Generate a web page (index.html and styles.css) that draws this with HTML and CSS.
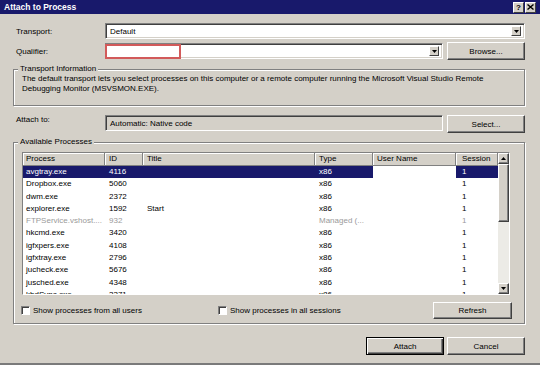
FILE: index.html
```html
<!DOCTYPE html>
<html lang="en">
<head>
    <meta charset="UTF-8">
    <meta name="viewport" content="width=device-width, initial-scale=1.0">
    <title>Attach to Process</title>
    <link rel="stylesheet" href="styles.css">
</head>
<body>
    <div class="dialog">
        <div class="titlebar">
            <span class="title">Attach to Process</span>
            <div class="caption-btns">
                <span class="cap-btn">?</span>
                <span class="cap-btn">
                    <svg width="7" height="6" viewBox="0 0 7 6"><path d="M0.5 0.5 L6.5 5.5 M6.5 0.5 L0.5 5.5" stroke="#000" stroke-width="1.4"/></svg>
                </span>
            </div>
        </div>

        <div class="content">
            <div class="form-row row-transport">
                <label class="lbl">Transport:</label>
                <div class="combo combo-wide">
                    <span class="combo-text">Default</span>
                    <span class="drop-btn"><svg width="5" height="3" viewBox="0 0 5 3"><path d="M0 0 H5 L2.5 3 Z" fill="#000"/></svg></span>
                </div>
            </div>

            <div class="form-row row-qualifier">
                <label class="lbl">Qualifier:</label>
                <div class="combo">
                    <span class="mark"></span>
                    <span class="combo-text"></span>
                    <span class="drop-btn"><svg width="5" height="3" viewBox="0 0 5 3"><path d="M0 0 H5 L2.5 3 Z" fill="#000"/></svg></span>
                </div>
                <button class="btn">Browse...</button>
            </div>

            <fieldset class="group group-info">
                <legend>Transport Information</legend>
                <p class="info-text">The default transport lets you select processes on this computer or a remote computer running the Microsoft Visual Studio Remote Debugging Monitor (MSVSMON.EXE).</p>
            </fieldset>

            <div class="form-row row-attach">
                <label class="lbl">Attach to:</label>
                <div class="readonly-field">Automatic: Native code</div>
                <button class="btn">Select...</button>
            </div>

            <fieldset class="group group-proc">
                <legend>Available Processes</legend>
                <div class="listview">
                    <div class="lv-main">
                        <div class="lv-head">
                            <span>Process</span>
                            <span>ID</span>
                            <span>Title</span>
                            <span>Type</span>
                            <span>User Name</span>
                            <span>Session</span>
                        </div>
                        <div class="lv-body">
                            <div class="lv-row selected"><span>avgtray.exe</span><span>4116</span><span></span><span>x86</span><span></span><span>1</span></div>
                            <div class="lv-row"><span>Dropbox.exe</span><span>5060</span><span></span><span>x86</span><span></span><span>1</span></div>
                            <div class="lv-row"><span>dwm.exe</span><span>2372</span><span></span><span>x86</span><span></span><span>1</span></div>
                            <div class="lv-row"><span>explorer.exe</span><span>1592</span><span>Start</span><span>x86</span><span></span><span>1</span></div>
                            <div class="lv-row disabled"><span>FTPService.vshost....</span><span>932</span><span></span><span>Managed (...</span><span></span><span>1</span></div>
                            <div class="lv-row"><span>hkcmd.exe</span><span>3420</span><span></span><span>x86</span><span></span><span>1</span></div>
                            <div class="lv-row"><span>igfxpers.exe</span><span>4108</span><span></span><span>x86</span><span></span><span>1</span></div>
                            <div class="lv-row"><span>igfxtray.exe</span><span>2796</span><span></span><span>x86</span><span></span><span>1</span></div>
                            <div class="lv-row"><span>jucheck.exe</span><span>5676</span><span></span><span>x86</span><span></span><span>1</span></div>
                            <div class="lv-row"><span>jusched.exe</span><span>4348</span><span></span><span>x86</span><span></span><span>1</span></div>
                            <div class="lv-row"><span>kbdSync.exe</span><span>3371</span><span></span><span>x86</span><span></span><span>1</span></div>
                        </div>
                    </div>
                    <div class="scrollbar">
                        <span class="sb-btn"><svg width="5" height="3" viewBox="0 0 5 3"><path d="M0 3 H5 L2.5 0 Z" fill="#000"/></svg></span>
                        <span class="sb-thumb"></span>
                        <span class="sb-track"></span>
                        <span class="sb-btn"><svg width="5" height="3" viewBox="0 0 5 3"><path d="M0 0 H5 L2.5 3 Z" fill="#000"/></svg></span>
                    </div>
                </div>

                <div class="proc-options">
                    <label class="chk chk-users"><span class="box"></span>Show processes from all users</label>
                    <label class="chk"><span class="box"></span>Show processes in all sessions</label>
                    <button class="btn btn-refresh">Refresh</button>
                </div>
            </fieldset>

            <div class="footer">
                <button class="btn btn-default">Attach</button>
                <button class="btn">Cancel</button>
            </div>
        </div>
    </div>
</body>
</html>
```

FILE: styles.css
```css
* {
    box-sizing: border-box;
}

body {
    margin: 0;
    font-family: "Liberation Sans", Arial, sans-serif;
    font-size: 8px;
    color: #000;
    background: #d4d0c8;
}

.dialog {
    width: 540px;
    height: 365px;
    background: #d4d0c8;
    border-bottom: 2px solid #7a7a7a;
    overflow: hidden;
}

/* title bar */
.titlebar {
    height: 14px;
    background: #18196b;
    display: flex;
    align-items: center;
    justify-content: space-between;
    padding: 0 4px 0 4px;
}

.title {
    color: #fff;
    font-weight: bold;
    font-size: 8.5px;
}

.caption-btns {
    display: flex;
    gap: 1px;
}

.cap-btn {
    width: 11px;
    height: 11px;
    background: #d4d0c8;
    border: 1px solid;
    border-color: #fff #404040 #404040 #fff;
    display: flex;
    align-items: center;
    justify-content: center;
    font-weight: bold;
    font-size: 8px;
    line-height: 9px;
}

/* form rows */
.content {
    padding: 9px 15px 0 13px;
}

.form-row {
    display: grid;
    grid-template-columns: 88px 338px 78px;
    column-gap: 4px;
    align-items: center;
}

.row-transport {
    height: 16px;
}

.row-qualifier {
    margin-top: 3px;
    height: 18px;
}

.row-attach {
    margin-top: 9px;
    height: 18px;
    align-items: start;
}

.lbl {
    padding-left: 3px;
}

.combo {
    height: 16px;
    background: #fff;
    border: 1px solid;
    border-color: #808080 #fff #fff #808080;
    box-shadow: inset 1px 1px 0 #404040, inset -1px -1px 0 #d4d0c8;
    display: flex;
    align-items: center;
    padding: 0 3px 0 4px;
}

.combo-wide {
    grid-column: 2 / 4;
}

.combo-text {
    flex: 1;
}

.mark {
    width: 76px;
    height: 15px;
    margin-left: -5px;
    border: 2px solid #d25a5a;
    background: #fff;
}

.drop-btn {
    width: 10px;
    height: 10px;
    background: #d4d0c8;
    border: 1px solid;
    border-color: #fff #404040 #404040 #fff;
    display: flex;
    align-items: center;
    justify-content: center;
}

.readonly-field {
    height: 16px;
    border: 1px solid;
    border-color: #808080 #fff #fff #808080;
    box-shadow: inset 1px 1px 0 #404040;
    padding: 3px 4px 0 4px;
    line-height: 10px;
}

.btn {
    height: 18px;
    font-family: inherit;
    font-size: 8px;
    color: #000;
    background: #d4d0c8;
    border: 1px solid;
    border-color: #fff #404040 #404040 #fff;
    box-shadow: inset -1px -1px 0 #808080;
    padding: 0;
    cursor: pointer;
}

.btn-default {
    border: 1px solid #000;
    box-shadow: inset 1px 1px 0 #fff, inset -1px -1px 0 #404040, inset -2px -2px 0 #808080;
}

/* group boxes */
.group {
    margin: 0;
    min-width: 0;
    border: 1px solid #808080;
    box-shadow: inset 1px 1px 0 #fff, 1px 1px 0 #fff;
    padding: 0 12px 4px 8px;
}

.group legend {
    margin-left: -4px;
    padding: 0 2px;
    line-height: 10px;
    background: #d4d0c8;
}

.group-info {
    margin-top: 4px;
    padding-bottom: 12px;
}

.info-text {
    margin: 0;
    line-height: 9.5px;
}

.group-proc {
    margin-top: 4px;
    padding-top: 5px;
}

/* process list */
.listview {
    display: flex;
    height: 143px;
    margin-right: 2px;
    background: #fff;
    border: 1px solid;
    border-color: #808080 #fff #fff #808080;
}

.lv-main {
    width: 475px;
    overflow: hidden;
}

.lv-head,
.lv-row {
    display: grid;
    grid-template-columns: 82px 38px 172px 58px 83px 42px;
}

.lv-head {
    height: 13px;
}

.lv-head span {
    background: #d4d0c8;
    border-right: 1px solid #808080;
    border-bottom: 1px solid #808080;
    box-shadow: inset 1px 1px 0 #fff;
    padding-left: 4px;
    line-height: 12px;
}

.lv-row {
    height: 12.3px;
    line-height: 12.3px;
}

.lv-row span,
.lv-head span {
    white-space: nowrap;
    overflow: hidden;
}

.lv-row span {
    padding-left: 4px;
}

.lv-head span:first-child,
.lv-row span:first-child {
    padding-left: 3px;
}

.lv-row span:last-child,
.lv-head span:last-child {
    padding-left: 6px;
}

.lv-row.selected span {
    background: #18196b;
    color: #fff;
}

.lv-row.selected span:nth-child(5) {
    background: #fff;
}

.lv-row.disabled {
    color: #9a9a9a;
}

.scrollbar {
    width: 11px;
    display: flex;
    flex-direction: column;
}

.sb-btn,
.sb-thumb {
    background: #d4d0c8;
    border: 1px solid;
    border-color: #fff #404040 #404040 #fff;
    box-shadow: inset -1px -1px 0 #808080;
}

.sb-btn {
    height: 11px;
    display: flex;
    align-items: center;
    justify-content: center;
}

.sb-thumb {
    height: 58px;
}

.sb-track {
    flex: 1;
    background: #ecebe6;
}

/* options under the list */
.proc-options {
    margin-top: 7px;
    height: 17px;
    display: flex;
    align-items: center;
}

.chk {
    display: flex;
    align-items: center;
    gap: 3px;
}

.chk-users {
    width: 197px;
    margin-left: -1px;
}

.box {
    width: 9px;
    height: 9px;
    background: #fff;
    border: 1px solid;
    border-color: #808080 #fff #fff #808080;
    box-shadow: inset 1px 1px 0 #404040;
}

.btn-refresh {
    margin-left: auto;
    width: 79px;
    height: 17px;
}

.footer {
    margin-top: 13px;
    display: flex;
    justify-content: flex-end;
    gap: 3px;
}

.footer .btn {
    width: 78px;
}
```
